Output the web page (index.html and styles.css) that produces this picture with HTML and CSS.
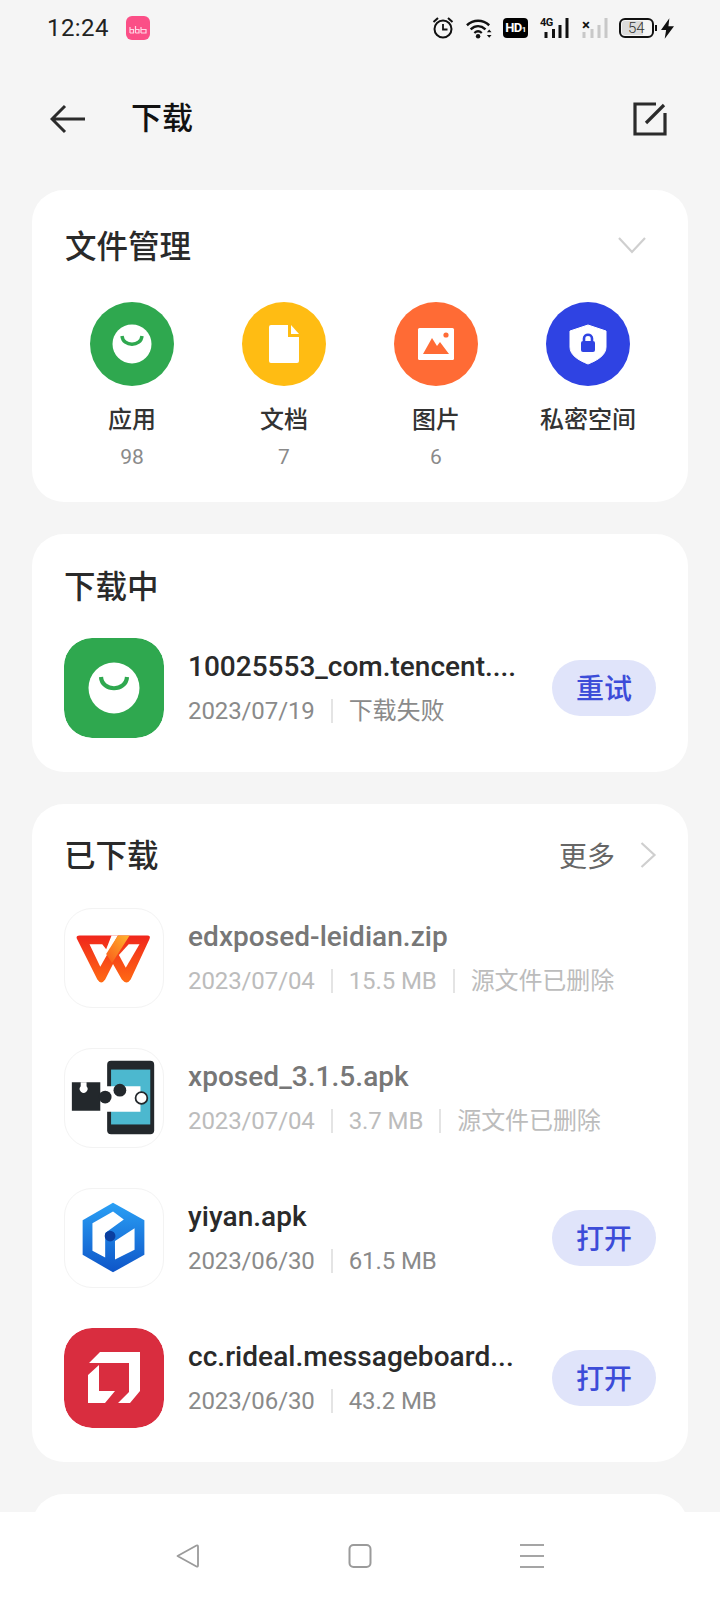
FILE: index.html
```html
<!DOCTYPE html>
<html lang="zh">
<head>
<meta charset="utf-8">
<title>下载</title>
<link rel="stylesheet" href="styles.css">
</head>
<body>
<div class="app">
  <div class="status">
    <span class="time">12:24</span>
    <svg class="app-badge" viewBox="0 0 24 24"><rect width="24" height="24" rx="6" fill="#fb4f87"/><path d="M4 11v6M4 17h3.5v-3.5H4M9.5 10v7M9.5 17h3.5v-3.5H9.5M15 11v6M15 17h5v-3.5h-5" stroke="#ffd6e4" stroke-width="1.2" fill="none"/></svg>
    <span class="status-gap"></span>
    <svg class="si si-alarm" viewBox="0 0 22 22"><circle cx="11" cy="12" r="8.5" fill="none" stroke="#111" stroke-width="2"/><path d="M11 7V12.5H15.5" fill="none" stroke="#111" stroke-width="1.8"/><path d="M1.5 5L6 1M20.5 5L16 1" stroke="#111" stroke-width="2"/></svg>
    <svg class="si si-wifi" viewBox="0 0 28 22"><path d="M1 7.5C8 1 18 1 25 7.5" fill="none" stroke="#111" stroke-width="2.6"/><path d="M5 12C10 7.5 16 7.5 21 12" fill="none" stroke="#111" stroke-width="2.6"/><path d="M9 15.8C11.5 13.5 14.5 13.5 17 15.8" fill="none" stroke="#111" stroke-width="2.4"/><circle cx="13" cy="19.4" r="2.4" fill="#111"/><path d="M22.5 15l2.5-3 2.5 3zM22.5 18l2.5 3 2.5-3z" fill="#111"/></svg>
    <span class="hd">HD<small>1</small></span>
    <span class="signal"><b class="sig-tag">4G</b><svg viewBox="0 0 29 20"><path d="M6 20v-6M13.5 20v-9M20 20v-13M27 20V0" stroke="#111" stroke-width="3"/></svg></span>
    <span class="signal weak"><b class="sig-tag">×</b><svg viewBox="0 0 29 20"><path d="M3 20v-6M11 20v-9M18 20v-13M25 20V0" stroke="#c8c8c8" stroke-width="3"/></svg></span>
    <span class="battery"><span class="batt-fill">54</span></span>
    <svg class="si si-bolt" viewBox="0 0 14 22"><path d="M9 0L0 12.5H5.5L4 22L14 8.5H8z" fill="#111"/></svg>
  </div>

  <header class="topbar">
    <svg class="back" viewBox="0 0 36 30"><path d="M35 15H2M15 2L2 15L15 28" fill="none" stroke="#2b2b2b" stroke-width="3"/></svg>
    <h1>下载</h1>
    <svg class="edit" viewBox="0 0 34 34"><path d="M23 2H2V32H32V11" fill="none" stroke="#2b2b2b" stroke-width="3.2"/><path d="M13 21L31 3" fill="none" stroke="#2b2b2b" stroke-width="3.2"/></svg>
  </header>

  <main class="content">
    <section class="card card-files">
      <div class="card-head">
        <h2>文件管理</h2>
        <svg class="chev-down" viewBox="0 0 30 20"><path d="M2 3L15 17L28 3" fill="none" stroke="#cfcfcf" stroke-width="2.2"/></svg>
      </div>
      <div class="cats">
        <div class="cat">
          <div class="disc green"><svg viewBox="0 0 84 84"><circle cx="42" cy="42" r="19.5" fill="#fff"/><path d="M32 34C33 45 51 45 52 34" fill="none" stroke="#2fa84f" stroke-width="3.4"/></svg></div>
          <div class="cat-name">应用</div>
          <div class="cat-num">98</div>
        </div>
        <div class="cat">
          <div class="disc yellow"><svg viewBox="0 0 84 84"><path d="M27 25a2 2 0 0 1 2-2H46V35H57V59a2 2 0 0 1-2 2H29a2 2 0 0 1-2-2z" fill="#fff"/><path d="M49 23L57 32H49z" fill="#fff"/></svg></div>
          <div class="cat-name">文档</div>
          <div class="cat-num">7</div>
        </div>
        <div class="cat">
          <div class="disc orange"><svg viewBox="0 0 84 84"><rect x="24" y="26" width="36" height="32" rx="1.5" fill="#fff"/><path d="M29 52L38 36L43 44L46 40L55 52z" fill="#ff6b35"/><circle cx="52" cy="33" r="2.6" fill="#ff6b35"/></svg></div>
          <div class="cat-name">图片</div>
          <div class="cat-num">6</div>
        </div>
        <div class="cat">
          <div class="disc blue"><svg viewBox="0 0 84 84"><path d="M42 23L60 29V45C60 53 52 58 42 62C32 58 24 53 24 45V29z" fill="#fff" stroke="#fff" stroke-width="1" stroke-linejoin="round"/><rect x="35" y="39" width="14" height="11" rx="2" fill="#2f43e3"/><path d="M38 39V36.5C38 31.5 46 31.5 46 36.5V39" fill="none" stroke="#2f43e3" stroke-width="2.6"/></svg></div>
          <div class="cat-name">私密空间</div>
          <div class="cat-num">&nbsp;</div>
        </div>
      </div>
    </section>

    <section class="card card-active">
      <div class="card-head"><h2>下载中</h2></div>
      <div class="row">
        <svg class="tile" viewBox="0 0 100 100"><rect width="100" height="100" rx="28" fill="#2fa84f"/><circle cx="50" cy="50" r="25.5" fill="#fff"/><path d="M37 39C38 54 62 54 63 39" fill="none" stroke="#2fa84f" stroke-width="4.2"/></svg>
        <div class="info">
          <div class="name digits">10025553_com.tencent....</div>
          <div class="meta"><span>2023/07/19</span><i></i><span>下载失败</span></div>
        </div>
        <button class="pill">重试</button>
      </div>
    </section>

    <section class="card card-done">
      <div class="card-head">
        <h2>已下载</h2>
        <div class="more"><span>更多</span><svg viewBox="0 0 18 28"><path d="M2.5 2L15.5 14L2.5 26" fill="none" stroke="#cfcfcf" stroke-width="2.2"/></svg></div>
      </div>
      <div class="list">
        <div class="row gone">
          <svg class="tile framed" viewBox="0 0 100 100">
            <defs>
              <linearGradient id="wg" x1="0" y1="0" x2="0" y2="1"><stop offset="0" stop-color="#f0261c"/><stop offset="1" stop-color="#ff6a13"/></linearGradient>
              <linearGradient id="wd" x1="1" y1="0" x2="0" y2="1"><stop offset="0" stop-color="#ffb52e"/><stop offset="1" stop-color="#f9591a"/></linearGradient>
            </defs>
            <path d="M12 30Q11 27 15 27H84Q88 27 86 31L67 72Q63 78 58 72L49 56L41 72Q37 78 33 72Z" fill="url(#wg)"/>
            <path d="M25 36H38L42 41L47.5 27H54L36 59Z" fill="#fff"/>
            <path d="M76 36H65L55 47L62 60Z" fill="#fff"/>
            <path d="M54 27H66L48 55L42 46Z" fill="url(#wd)"/>
          </svg>
          <div class="info">
            <div class="name">edxposed-leidian.zip</div>
            <div class="meta"><span>2023/07/04</span><i></i><span>15.5 MB</span><i></i><span>源文件已删除</span></div>
          </div>
        </div>
        <div class="row gone">
          <svg class="tile framed" viewBox="0 0 100 100">
            <rect x="43" y="12" width="48" height="75" rx="4" fill="#23282c"/>
            <rect x="47" y="21" width="40" height="56" fill="#4cb8cf"/>
            <path d="M40 38H77V64H40z" fill="#fff"/>
            <circle cx="78" cy="50" r="6" fill="#fff" stroke="#23282c" stroke-width="1.8"/>
            <circle cx="56" cy="42" r="6.5" fill="#23282c"/>
            <path d="M7 34H36V63H7z" fill="#23282c"/>
            <path d="M16 34H22V38A4 4 0 1 1 16 38z" fill="#fff"/>
            <circle cx="41" cy="49" r="6.5" fill="#23282c"/>
          </svg>
          <div class="info">
            <div class="name">xposed_3.1.5.apk</div>
            <div class="meta"><span>2023/07/04</span><i></i><span>3.7 MB</span><i></i><span>源文件已删除</span></div>
          </div>
        </div>
        <div class="row">
          <svg class="tile framed" viewBox="0 0 100 100">
            <defs><linearGradient id="yg" x1="0" y1="0" x2="0" y2="1"><stop offset="0" stop-color="#2aa0f5"/><stop offset="1" stop-color="#0e55c8"/></linearGradient></defs>
            <path d="M49 14L81 32V67L49 85L18 67V32z" fill="url(#yg)"/>
            <path d="M28 35L49 23L60 31L41 45V70L28 63z" fill="#fff"/>
            <path d="M51 53L71 40V62L51 72z" fill="#fff"/>
            <circle cx="46" cy="48" r="5.5" fill="#0b3f9f"/>
          </svg>
          <div class="info">
            <div class="name">yiyan.apk</div>
            <div class="meta"><span>2023/06/30</span><i></i><span>61.5 MB</span></div>
          </div>
          <button class="pill">打开</button>
        </div>
        <div class="row">
          <svg class="tile" viewBox="0 0 100 100"><rect width="100" height="100" rx="28" fill="#d92d3f"/>
            <path d="M36 24H76V63L66 75H54L65 64V35H25z" fill="#fff"/>
            <path d="M24 47L35 37V63H51L41 75H24z" fill="#fff"/>
          </svg>
          <div class="info">
            <div class="name">cc.rideal.messageboard...</div>
            <div class="meta"><span>2023/06/30</span><i></i><span>43.2 MB</span></div>
          </div>
          <button class="pill">打开</button>
        </div>
      </div>
    </section>

    <section class="card card-next"></section>
  </main>

  <nav class="navbar">
    <svg viewBox="0 0 24 24"><path d="M1.5 12L20.5 1.5C21.5 1 22 1.5 22 2.5V21.5C22 22.5 21.5 23 20.5 22.5z" fill="none" stroke="#9b9b9b" stroke-width="1.8" stroke-linejoin="round"/></svg>
    <svg viewBox="0 0 24 24"><rect x="1.5" y="1" width="21" height="22" rx="4" fill="none" stroke="#9b9b9b" stroke-width="2"/></svg>
    <svg viewBox="0 0 24 24"><path d="M0 1H24M0 12H24M0 23H24" stroke="#a5a5a5" stroke-width="2"/></svg>
  </nav>
</div>
</body>
</html>
```
FILE: styles.css
```css
* { box-sizing: border-box; }
html, body { margin: 0; padding: 0; }
body {
  width: 720px;
  height: 1600px;
  overflow: hidden;
  background: #f5f5f5;
  font-family: Roboto, "Noto Sans CJK SC", sans-serif;
  color: #222;
}
.app { display: flex; flex-direction: column; height: 1600px; }

.status {
  display: flex;
  align-items: center;
  height: 56px;
  padding: 0 46px 0 47px;
  flex: none;
}
.time { font-size: 24px; font-weight: 400; color: #222; letter-spacing: 0.4px; }
.app-badge { width: 24px; height: 24px; margin-left: 17px; }
.status-gap { flex: 1; }
.si { flex: none; display: block; }
.si-alarm { width: 22px; height: 22px; margin-right: 12px; }
.si-wifi { width: 26px; height: 21px; margin-right: 11px; }
.si-bolt { width: 13px; height: 21px; margin-left: 7px; }
.hd {
  width: 25px; height: 20px; border-radius: 4px; background: #000; color: #fff;
  font-size: 13px; font-weight: 700; line-height: 20px; text-align: center;
  margin-right: 12px; letter-spacing: -0.5px;
}
.hd small { font-size: 8px; }
.signal { position: relative; display: block; width: 29px; height: 20px; margin-right: 12px; }
.signal svg { display: block; width: 29px; height: 20px; }
.sig-tag { position: absolute; left: 0; top: -1px; font-size: 11px; font-weight: 700; color: #111; line-height: 12px; letter-spacing: -0.6px; }
.signal.weak .sig-tag { font-size: 15px; top: 1px; left: 1px; }
.signal.weak { margin-right: 9px; }
.battery {
  position: relative;
  width: 35px; height: 20px; border: 2px solid #111; border-radius: 6px;
  display: flex; align-items: center; padding: 1px;
}
.battery::after {
  content: ""; position: absolute; right: -5px; top: 5px; width: 2px; height: 6px; background: #111;
}
.batt-fill {
  display: block; width: 21px; height: 14px; background: #dcdcdc; border-radius: 3px 0 0 3px;
  font-size: 15px; line-height: 14px; text-align: left; color: #333; padding-left: 6px; white-space: nowrap; font-weight: 300;
}

.topbar {
  display: flex;
  align-items: center;
  height: 126px;
  padding: 0 53px 0 50px;
  flex: none;
}
.back { width: 36px; height: 30px; flex: none; }
.topbar h1 { margin: 0 0 0 45px; flex: 1; font-size: 31px; font-weight: 500; color: #111; line-height: 40px; }
.edit { width: 34px; height: 34px; flex: none; }

.content {
  flex: 1;
  min-height: 0;
  overflow: hidden;
  display: flex;
  flex-direction: column;
  gap: 32px;
  padding: 8px 32px 0;
}
.card { background: #fff; border-radius: 32px; flex: none; }
.card-head {
  display: flex;
  align-items: center;
  justify-content: space-between;
  height: 40px;
}
h2 { margin: 0; font-size: 31.5px; font-weight: 500; color: #2a2a2a; line-height: 40px; }

.card-files { height: 312px; padding: 38px 32px 0 33px; }
.chev-down { width: 30px; height: 20px; margin: -6px 9px 0 0; }
.cats { display: grid; grid-template-columns: repeat(4, 152px); margin: 34px 0 0 -9px; }
.cat { display: flex; flex-direction: column; align-items: center; }
.disc { width: 84px; height: 84px; border-radius: 50%; }
.disc svg { display: block; width: 84px; height: 84px; }
.green { background: #2fa84f; }
.yellow { background: #ffbc13; }
.orange { background: #ff6b35; }
.blue { background: #2f43e3; }
.cat-name { margin-top: 18px; font-size: 24px; line-height: 32px; font-weight: 500; color: #333; white-space: nowrap; }
.cat-num { margin-top: 8px; font-size: 21px; line-height: 26px; color: #8a8a8a; font-weight: 400; }

.card-active { height: 238px; padding: 34px 32px 0; }
.row { display: flex; align-items: center; height: 100px; }
.card-active .row { margin-top: 30px; }
.tile { width: 100px; height: 100px; flex: none; border-radius: 28px; }
.tile.framed { border: 1px solid #f3f3f3; }
.info { flex: 1; min-width: 0; margin-left: 24px; }
.name { font-size: 28px; font-weight: 500; line-height: 36px; color: #2a2a2a; white-space: nowrap; letter-spacing: 0.05px; }
.name.digits { letter-spacing: 0; }
.meta { display: flex; align-items: center; margin-top: 10px; font-size: 24px; line-height: 32px; color: #8a8a8a; white-space: nowrap; letter-spacing: -0.1px; }
.meta i { display: block; width: 2px; height: 24px; margin: 0 16px; background: #e4e4e4; }
.gone .name { color: #777; }
.gone .meta { color: #bcbcbc; }
.pill {
  flex: none; width: 104px; height: 56px; border: 0; border-radius: 28px; background: #e0e4fa;
  color: #3c4cd8; font: 500 28px/60px Roboto, "Noto Sans CJK SC", sans-serif; padding: 0;
}

.card-done { height: 658px; padding: 33px 32px 0; }
.more { display: flex; align-items: center; gap: 24px; font-size: 28px; color: #666; margin-top: -4px; }
.more svg { width: 18px; height: 28px; margin-right: -1px; }
.list { display: flex; flex-direction: column; gap: 40px; margin-top: 31px; }

.card-next { height: 120px; }

.navbar {
  flex: none;
  height: 88px;
  background: #fff;
  display: flex;
  justify-content: center;
  gap: 148px;
  padding-top: 32px;
}
.navbar svg { width: 24px; height: 24px; display: block; }
```
